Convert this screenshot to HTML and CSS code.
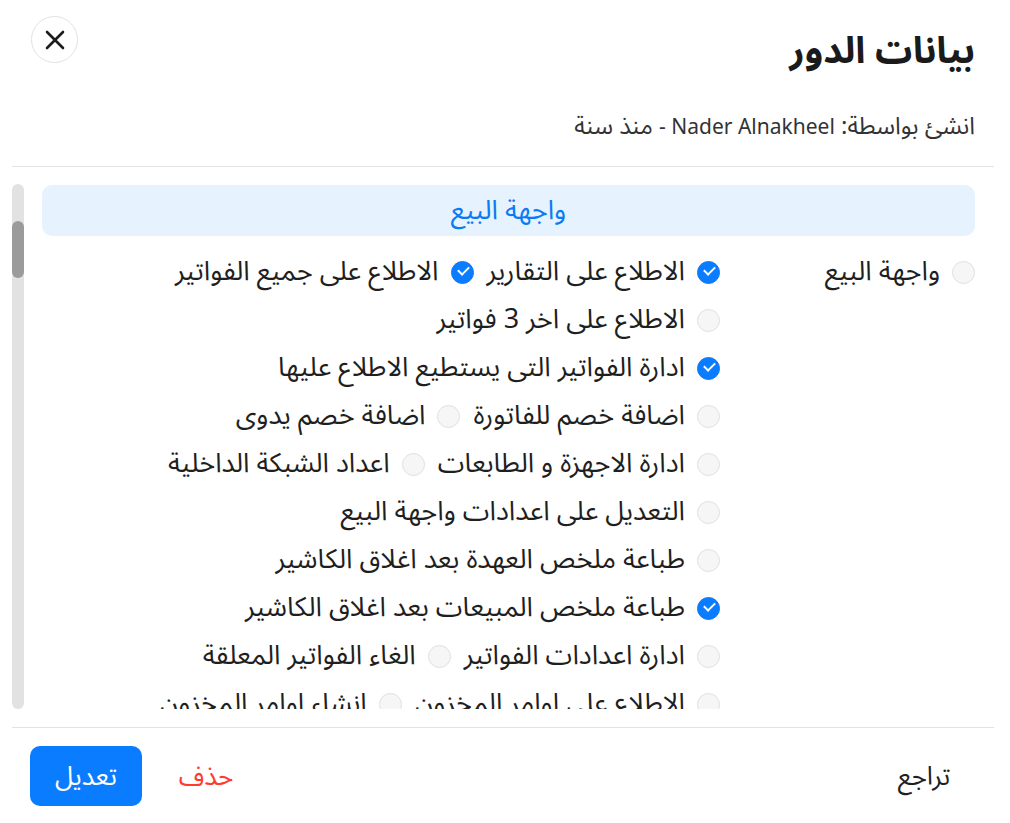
FILE: index.html
```html
<!DOCTYPE html>
<html lang="ar" dir="rtl">
<head>
    <meta charset="UTF-8">
    <meta name="viewport" content="width=device-width, initial-scale=1.0">
    <title>بيانات الدور</title>
    <link rel="stylesheet" href="styles.css">
</head>
<body>
    <div class="modal">
        <!-- رأس النافذة -->
        <header class="modal-header">
            <h1 class="modal-title">بيانات الدور</h1>
            <button class="close-btn" aria-label="اغلاق">
                <svg width="22" height="22" viewBox="0 0 22 22">
                    <path d="M3 3 L19 19 M19 3 L3 19" stroke="#1c1c1c" stroke-width="2.6" stroke-linecap="round"/>
                </svg>
            </button>
        </header>

        <p class="created-by">انشئ بواسطة: <span class="latin">Nader Alnakheel -</span> منذ سنة</p>

        <div class="divider top-divider"></div>

        <!-- منطقة الصلاحيات -->
        <div class="scroll-area">
            <div class="scroll-content">
                <div class="section-title">واجهة البيع</div>

                <div class="perm-grid">
                    <div class="group-col">
                        <label class="check-item">
                            <span class="check"></span>
                            <span>واجهة البيع</span>
                        </label>
                    </div>

                    <div class="perm-col">
                        <div class="perm-row">
                            <label class="check-item">
                                <span class="check checked"></span>
                                <span>الاطلاع على التقارير</span>
                            </label>
                            <label class="check-item">
                                <span class="check checked"></span>
                                <span>الاطلاع على جميع الفواتير</span>
                            </label>
                        </div>
                        <div class="perm-row">
                            <label class="check-item">
                                <span class="check"></span>
                                <span>الاطلاع على اخر 3 فواتير</span>
                            </label>
                        </div>
                        <div class="perm-row">
                            <label class="check-item">
                                <span class="check checked"></span>
                                <span>ادارة الفواتير التى يستطيع الاطلاع عليها</span>
                            </label>
                        </div>
                        <div class="perm-row">
                            <label class="check-item">
                                <span class="check"></span>
                                <span>اضافة خصم للفاتورة</span>
                            </label>
                            <label class="check-item">
                                <span class="check"></span>
                                <span>اضافة خصم يدوى</span>
                            </label>
                        </div>
                        <div class="perm-row">
                            <label class="check-item">
                                <span class="check"></span>
                                <span>ادارة الاجهزة و الطابعات</span>
                            </label>
                            <label class="check-item">
                                <span class="check"></span>
                                <span>اعداد الشبكة الداخلية</span>
                            </label>
                        </div>
                        <div class="perm-row">
                            <label class="check-item">
                                <span class="check"></span>
                                <span>التعديل على اعدادات واجهة البيع</span>
                            </label>
                        </div>
                        <div class="perm-row">
                            <label class="check-item">
                                <span class="check"></span>
                                <span>طباعة ملخص العهدة بعد اغلاق الكاشير</span>
                            </label>
                        </div>
                        <div class="perm-row">
                            <label class="check-item">
                                <span class="check checked"></span>
                                <span>طباعة ملخص المبيعات بعد اغلاق الكاشير</span>
                            </label>
                        </div>
                        <div class="perm-row">
                            <label class="check-item">
                                <span class="check"></span>
                                <span>ادارة اعدادات الفواتير</span>
                            </label>
                            <label class="check-item">
                                <span class="check"></span>
                                <span>الغاء الفواتير المعلقة</span>
                            </label>
                        </div>
                        <div class="perm-row">
                            <label class="check-item">
                                <span class="check"></span>
                                <span>الاطلاع على اوامر المخزون</span>
                            </label>
                            <label class="check-item">
                                <span class="check"></span>
                                <span>انشاء اوامر المخزون</span>
                            </label>
                        </div>
                    </div>
                </div>
            </div>

            <div class="scrollbar">
                <div class="scrollbar-thumb"></div>
            </div>
        </div>

        <div class="divider"></div>

        <!-- أزرار التحكم -->
        <footer class="modal-footer">
            <button class="btn btn-text">تراجع</button>
            <div class="spacer"></div>
            <button class="btn btn-danger">حذف</button>
            <button class="btn btn-primary">تعديل</button>
        </footer>
    </div>
</body>
</html>
```

FILE: styles.css
```css
* {
    margin: 0;
    padding: 0;
    box-sizing: border-box;
}

body {
    font-family: "Noto Sans Arabic", "Noto Sans", "DejaVu Sans", sans-serif;
    background: #ffffff;
    color: #1f1f1f;
    direction: rtl;
}

.modal {
    height: 823px;
    display: flex;
    flex-direction: column;
    overflow: hidden;
}

.modal > * {
    flex-shrink: 0;
}

/* رأس النافذة */
.modal-header {
    display: flex;
    justify-content: space-between;
    align-items: flex-start;
    padding: 16px 35px 0 31px;
}

.modal-title {
    font-size: 37px;
    font-weight: 700;
    line-height: 50px;
    margin-top: 10px;
    color: #1a1a1a;
}

.close-btn {
    width: 47px;
    height: 47px;
    border-radius: 50%;
    border: 1px solid #e2e2e2;
    background: #fff;
    display: flex;
    align-items: center;
    justify-content: center;
    cursor: pointer;
}

.created-by {
    font-size: 24px;
    line-height: 30px;
    color: #333;
    padding: 0 35px;
    margin-top: 35px;
}

.created-by .latin {
    font-family: "Noto Sans", sans-serif;
    font-size: 21px;
}

.divider {
    height: 1px;
    background: #e3e3e3;
    margin: 0 16px 0 12px;
}

.top-divider {
    margin-top: 24px;
}

/* منطقة الصلاحيات */
.scroll-area {
    display: flex;
    height: 525px;
    margin: 17px 16px 18px 12px;
    gap: 18px;
}

.scroll-content {
    flex: 1;
    overflow: hidden;
    padding-right: 19px;
}

.scrollbar {
    width: 12px;
    background: #e2e2e2;
    border-radius: 6px;
    flex-shrink: 0;
}

.scrollbar-thumb {
    margin-top: 37px;
    height: 57px;
    border-radius: 6px;
    background: #9b9b9b;
}

.section-title {
    background: #e6f2fd;
    color: #0a7bf2;
    border-radius: 10px;
    height: 51px;
    display: flex;
    align-items: center;
    justify-content: center;
    font-size: 27px;
    line-height: 40px;
    margin-top: 1px;
}

.perm-grid {
    display: flex;
    margin-top: 12px;
}

.group-col {
    width: 255px;
    flex-shrink: 0;
}

.perm-col {
    flex: 1;
}

.perm-row {
    display: flex;
    gap: 13px;
    height: 48px;
    align-items: center;
}

.group-col .check-item {
    height: 48px;
}

.check-item {
    display: flex;
    align-items: center;
    gap: 12px;
    font-size: 27px;
    line-height: 40px;
    color: #1f1f1f;
    white-space: nowrap;
    cursor: pointer;
}

.check {
    width: 23px;
    height: 23px;
    border-radius: 50%;
    background: #f6f6f6;
    border: 1px solid #e0e0e0;
    flex-shrink: 0;
    position: relative;
}

.check.checked {
    background: #0a7cff;
    border-color: #0a7cff;
}

.check.checked::after {
    content: '';
    position: absolute;
    left: 6px;
    top: 4px;
    width: 9px;
    height: 5px;
    border-left: 2.5px solid #fff;
    border-bottom: 2.5px solid #fff;
    transform: rotate(-45deg);
}

/* أزرار التحكم */
.modal-footer {
    display: flex;
    align-items: center;
    gap: 8px;
    padding: 18px 30px 18px 30px;
}

.spacer {
    flex: 1;
}

.btn {
    width: 112px;
    height: 60px;
    border: none;
    border-radius: 10px;
    font-family: inherit;
    font-size: 26px;
    background: transparent;
    cursor: pointer;
}

.btn-text {
    color: #1f1f1f;
}

.btn-danger {
    color: #ff3b30;
}

.btn-primary {
    background: #0a7cff;
    color: #fff;
}
```
